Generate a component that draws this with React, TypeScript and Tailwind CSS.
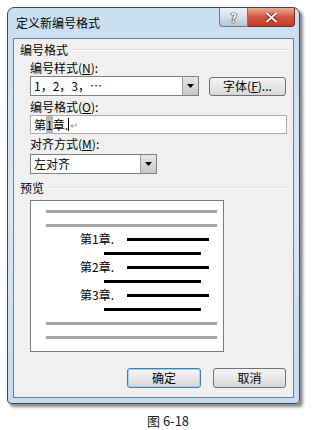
import React from 'react';

const font = "font-['Noto_Sans_CJK_SC','Noto_Sans',sans-serif]";

function DropButton() {
  return (
    <div className="w-[16px] h-full flex items-center justify-center border-l border-[#a0a0a0] bg-gradient-to-b from-[#e6e6e6] to-[#c8c8c8]">
      <svg width="7" height="4" viewBox="0 0 7 4">
        <path d="M0 0h7L3.5 4z" fill="#000" />
      </svg>
    </div>
  );
}

function Combo({ value, width }: { value: string; width: string }) {
  return (
    <div className={`${width} h-[20px] flex border border-[#7f7f7f] bg-white`}>
      <div className="flex-1 pl-[3px] text-[12px] leading-[18px] text-black">{value}</div>
      <DropButton />
    </div>
  );
}

function GroupLabel({ text }: { text: string }) {
  return (
    <div className="flex items-center pl-[6px] pr-[5px] h-[16px]">
      <span className="text-[12px] leading-[16px] text-black">{text}</span>
      <div className="flex-1 ml-[4px] h-[2px] border-t border-[#d8dde2] border-b border-b-white" />
    </div>
  );
}

function Label({ text, k }: { text: string; k: string }) {
  return (
    <div className="pl-[16px] h-[16px] text-[12px] leading-[16px] text-black">
      {text}(<span className="underline">{k}</span>):
    </div>
  );
}

function Btn({ text, primary }: { text: string; primary?: boolean }) {
  return (
    <div
      className={`h-[20px] flex items-center justify-center rounded-[3px] border text-[12px] text-black bg-gradient-to-b from-[#f4f4f4] via-[#e8e8e8] to-[#d6d6d6] ${
        primary ? 'w-[74px] border-[#3c7fb1] shadow-[inset_0_0_0_1px_#9fd4f0]' : 'w-[73px] border-[#707070]'
      }`}
    >
      {text}
    </div>
  );
}

function GrayLine() {
  return (
    <div className="h-[14px] flex items-center pl-[15px]">
      <div className="w-[171px] h-[3px] bg-[#a6a6a6]" />
    </div>
  );
}

function BlackLine() {
  return (
    <div className="h-[14px] flex items-center pl-[73px]">
      <div className="w-[97px] h-[3px] bg-black" />
    </div>
  );
}

function Heading({ n }: { n: number }) {
  return (
    <div className="h-[14px] flex items-center pl-[49px]">
      <span className="w-[47px] text-[12px] leading-[14px] text-black">第{n}章.</span>
      <div className="w-[82px] h-[3px] bg-black" />
    </div>
  );
}

export default function App() {
  return (
    <div className={`w-[313px] h-[430px] bg-white overflow-hidden ${font}`}>
      <div className="ml-[7px] mt-[7px] w-[293px] h-[397px] flex flex-col rounded-t-[7px] rounded-b-[4px] border border-[#3a4756] bg-gradient-to-b from-[#c9def1] via-[#d8e7f5] to-[#c6dcf0] shadow-[3px_3px_3px_rgba(0,0,0,0.45)]">
        {/* title bar */}
        <div className="h-[30px] flex items-start pl-[8px] pr-[4px]">
          <div className="pt-[7px] text-[12px] leading-[16px] text-black">定义新编号格式</div>
          <div className="ml-auto flex">
            <div className="w-[29px] h-[19px] flex items-center justify-center rounded-bl-[4px] border border-t-0 border-[#6c7886] bg-gradient-to-b from-[#eef2f6] via-[#d6dee7] to-[#b8c4d1]">
              <span className="text-[13px] leading-none font-bold text-white [text-shadow:0_0_1px_#222,0_0_1px_#222,0_0_1px_#222]">?</span>
            </div>
            <div className="w-[47px] h-[19px] flex items-center justify-center rounded-br-[4px] border border-l-0 border-t-0 border-[#6b2b22] bg-gradient-to-b from-[#e9a897] via-[#d2553f] to-[#c43a25]">
              <svg width="11" height="9" viewBox="0 0 11 9">
                <path d="M1 0.5L10 8.5M10 0.5L1 8.5" stroke="#5a1a10" strokeWidth="3.4" strokeLinecap="round" />
                <path d="M1 0.5L10 8.5M10 0.5L1 8.5" stroke="#fff" strokeWidth="2" strokeLinecap="round" />
              </svg>
            </div>
          </div>
        </div>

        {/* client area */}
        <div className="mx-[5px] h-[360px] flex flex-col border border-[#6f7c8a] bg-[#f0f0f0]">
          <div className="mt-[3px]">
            <GroupLabel text="编号格式" />
          </div>
          <div className="mt-[2px]">
            <Label text="编号样式" k="N" />
          </div>
          <div className="pl-[16px] flex items-center">
            <Combo value="1，2，3，…" width="w-[169px]" />
            <div className="ml-[10px] w-[77px] h-[19px] flex items-center justify-center rounded-[3px] border border-[#707070] bg-gradient-to-b from-[#f4f4f4] to-[#d8d8d8] text-[12px] text-black">
              字体(<span className="underline">F</span>)...
            </div>
          </div>
          <div className="mt-[3px]">
            <Label text="编号格式" k="O" />
          </div>
          <div className="ml-[16px] w-[257px] h-[19px] flex items-center pl-[3px] border border-[#abadb3] bg-white text-[12px] text-black">
            <span>第</span>
            <span className="bg-[#b9b9b9]">1</span>
            <span>章.</span>
            <span className="w-[1px] h-[13px] bg-black" />
            <span className="text-[10px] text-[#a0a0a0] ml-[1px]">↵</span>
          </div>
          <div className="mt-[2px]">
            <Label text="对齐方式" k="M" />
          </div>
          <div className="mt-[2px] pl-[16px]">
            <Combo value="左对齐" width="w-[127px]" />
          </div>
          <div className="mt-[6px]">
            <GroupLabel text="预览" />
          </div>
          <div className="mt-[4px] ml-[16px] w-[194px] h-[152px] border border-[#7a7a7a] bg-white pt-[3px]">
            <GrayLine />
            <GrayLine />
            <Heading n={1} />
            <BlackLine />
            <Heading n={2} />
            <BlackLine />
            <Heading n={3} />
            <BlackLine />
            <GrayLine />
            <GrayLine />
          </div>
          <div className="mt-[16px] flex justify-end gap-[12px] pr-[7px]">
            <Btn text="确定" primary />
            <Btn text="取消" />
          </div>
        </div>
      </div>

      <div className="mt-[9px] pl-[147px] text-[13px] leading-[16px] text-[#222]">图 6-18</div>
    </div>
  );
}
